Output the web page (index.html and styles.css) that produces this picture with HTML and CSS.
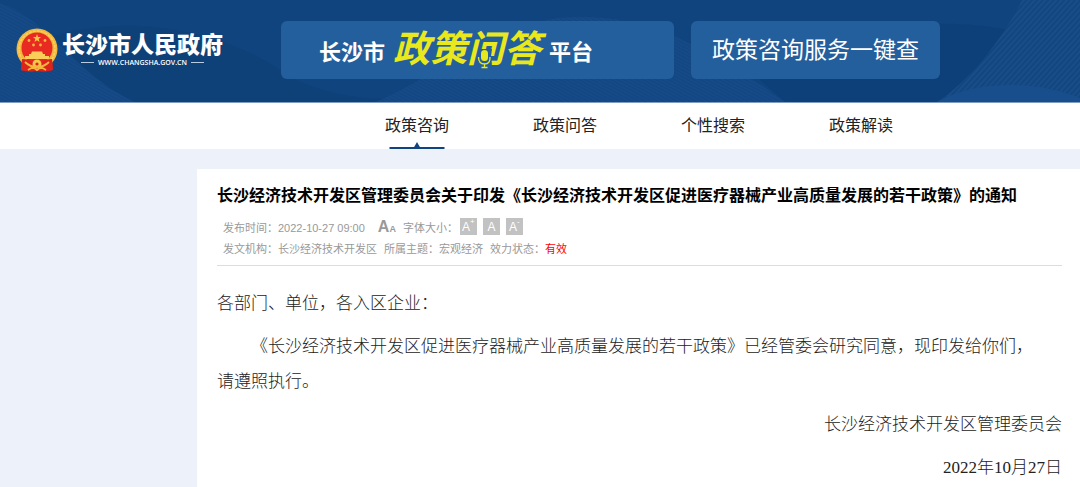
FILE: index.html
```
<!DOCTYPE html>
<html lang="zh-CN">
<head>
  <meta charset="UTF-8">
  <meta name="viewport" content="width=device-width, initial-scale=1.0">
  <title>长沙市政策问答平台</title>
  <link rel="stylesheet" href="styles.css">
</head>
<body>

  <header class="header">
    <svg class="header-bg" viewBox="0 0 1080 102" preserveAspectRatio="xMidYMid slice" aria-hidden="true">
      <defs>
        <pattern id="mesh" width="5" height="3" patternUnits="userSpaceOnUse" patternTransform="rotate(28)">
          <path d="M0 1H5" stroke="#3a78b8" stroke-width="1" opacity=".16"/>
        </pattern>
        <pattern id="rays" width="5" height="4" patternUnits="userSpaceOnUse" patternTransform="rotate(-48)">
          <path d="M0 1H5" stroke="#3a78b8" stroke-width="1" opacity=".28"/>
        </pattern>
      </defs>
      <rect width="1080" height="102" fill="#10447f"/>
      <path d="M30 45C100 12 210 22 280 70S470 100 560 60L640 102H135Z" fill="#0d3d74" opacity=".5"/>
      <path d="M0 3C50 20 75 75 135 102H0Z" fill="#124682"/>
      <path d="M0 3C50 20 75 75 135 102H0Z" fill="url(#mesh)"/>
      <path d="M375 102C430 80 500 20 570 17S700 40 785 102Z" fill="#124682"/>
      <path d="M375 102C430 80 500 20 570 17S700 40 785 102Z" fill="url(#mesh)"/>
      <path d="M760 80C850 20 960 5 1080 50V102H785Z" fill="#0d3e75" opacity=".7"/>
      <path d="M1022 0C1002 40 970 80 937 102H1080V0Z" fill="#124680"/>
      <path d="M1022 0C1002 40 970 80 937 102H1080V0Z" fill="url(#rays)"/>
      <path d="M937 102C980 78 1040 82 1080 98V102Z" fill="#184e8b"/>
    </svg>

    <a class="logo" href="#">
      <svg class="emblem" viewBox="0 0 42 44" aria-hidden="true">
        <path d="M6 31L5 42Q13 45 21 43Q29 45 37 42L36 31Z" fill="#d9201c"/>
        <circle cx="21" cy="21" r="20.5" fill="#f3b83c"/>
        <circle cx="21" cy="21" r="18" fill="none" stroke="#f9d263" stroke-width="1.5" stroke-dasharray="3 1"/>
        <circle cx="21" cy="20" r="15.5" fill="#e92a23"/>
        <path d="M21 6L22 9H25L22.700 11L23.500 14L21 12.200L18.500 14L19.300 11L17 9H20Z" fill="#f9c944"/>
        <g fill="#f5b93b">
          <circle cx="13" cy="12.500" r="1.400"/><circle cx="29" cy="12.500" r="1.400"/>
          <circle cx="17.500" cy="17" r="1.400"/><circle cx="24.500" cy="17" r="1.400"/>
        </g>
        <path d="M16 23.500H26L27 26H29V28H33V31H9V28H13V26H15Z" fill="#f9cf59"/>
        <path d="M6 31Q12 31 16 34H26Q30 31 36 31L37 42Q29 44 21 42Q13 44 5 42Z" fill="#dc241d"/>
        <circle cx="21" cy="36" r="4.500" fill="#f7c64a"/>
        <circle cx="21" cy="36" r="1.600" fill="#dc241d"/>
        <path d="M9 34Q14 39 21 39T33 34M12 42L17 39L21 42L25 39L30 42" fill="none" stroke="#f3b83c" stroke-width="1.800"/>
      </svg>
      <span class="logo-text">
        <span class="logo-name">长沙市人民政府</span>
        <span class="logo-url">WWW.CHANGSHA.GOV.CN</span>
      </span>
    </a>

    <a class="banner banner-main" href="#">
      <span>长沙市</span>
      <span class="banner-title">政策<span class="ask">问<svg class="mic" viewBox="0 0 16 22" aria-hidden="true">
        <path d="M3 0H16L13 22H0Z" fill="#245f9d"/>
        <rect x="5" y="1" width="7" height="11" rx="3.500" fill="#e8e81c"/>
        <path d="M2.500 8Q2.500 15 8.500 15T14 8M8.500 15V18M5.500 18.500H11.500" fill="none" stroke="#e8e81c" stroke-width="1.300"/>
      </svg></span>答</span>
      <span>平台</span>
    </a>

    <a class="banner banner-search" href="#">政策咨询服务一键查</a>
  </header>

  <nav class="nav">
    <a class="active" href="#">政策咨询</a>
    <a href="#">政策问答</a>
    <a href="#">个性搜索</a>
    <a href="#">政策解读</a>
  </nav>

  <main class="article">
    <h1>长沙经济技术开发区管理委员会关于印发《长沙经济技术开发区促进医疗器械产业高质量发展的若干政策》的通知</h1>

    <div class="meta">
      <div class="meta-row">
        <span class="date">发布时间：2022-10-27 09:00</span>
        <span class="size-icon" aria-hidden="true"><b>A</b><b>A</b></span>
        <span class="size-label">字体大小：</span>
        <button type="button">A<sup>+</sup></button>
        <button type="button">A</button>
        <button type="button">A<sup>-</sup></button>
      </div>
      <div class="meta-row">
        <span class="meta-item">发文机构：长沙经济技术开发区</span>
        <span class="meta-item">所属主题：宏观经济</span>
        <span class="meta-item">效力状态：<em>有效</em></span>
      </div>
    </div>

    <div class="content">
      <p>各部门、单位，各入区企业：</p>
      <p class="indent">《长沙经济技术开发区促进医疗器械产业高质量发展的若干政策》已经管委会研究同意，现印发给你们，<br>请遵照执行。</p>
      <p class="sign">长沙经济技术开发区管理委员会</p>
      <p class="sign">2022年10月27日</p>
    </div>
  </main>

</body>
</html>
```

FILE: styles.css
```
* {
  box-sizing: border-box;
}

body {
  margin: 0;
  background-color: #edf1f9;
  font-family: "Liberation Sans", "Noto Sans CJK SC", sans-serif;
  color: #222;
}

a {
  color: inherit;
  text-decoration: none;
}

/* Header */
.header {
  position: relative;
  display: flex;
  align-items: center;
  height: 103px;
  padding: 0 16px 3px;
  border-bottom: 1px solid #7f9dc0;
  background-color: #10447f;
  color: #fff;
  white-space: nowrap;
  overflow: hidden;
}

.header-bg {
  position: absolute;
  top: 0;
  left: 0;
  width: 100%;
  height: 100%;
}

.logo,
.banner {
  position: relative;
  display: flex;
  align-items: center;
  flex-shrink: 0;
}

.logo {
  gap: 4px;
  width: 265px;
}

.emblem {
  width: 42px;
  height: 44px;
}

.logo-text {
  display: flex;
  flex-direction: column;
  align-items: center;
}

.logo-name {
  font-size: 23px;
  font-weight: 900;
  line-height: 26px;
}

.logo-url {
  display: flex;
  align-items: center;
  gap: 4px;
  font-family: "Open Sans", sans-serif;
  font-size: 7px;
  font-weight: 600;
  line-height: 10px;
}

.logo-url::before,
.logo-url::after {
  content: "";
  width: 13px;
  height: 1px;
  background-color: #b9cbe0;
}

.banner {
  height: 58px;
  border-radius: 6px;
  background-color: #245f9d;
  font-size: 22px;
}

.banner-main {
  gap: 8px;
  width: 393px;
  margin-right: 17px;
  padding-left: 38px;
  font-weight: 700;
}

.banner-title {
  color: #e8e81c;
  font-size: 37px;
  font-style: italic;
  line-height: 52px;
}

.ask {
  position: relative;
}

/* microphone sits inside the character's frame */
.mic {
  position: absolute;
  top: 20px;
  left: 9px;
  width: 16px;
  height: 22px;
}

.banner-search {
  justify-content: center;
  width: 249px;
  padding-bottom: 4px;
  font-size: 23px;
}

/* Navigation */
.nav {
  display: flex;
  height: 46px;
  padding-left: 343px;
  background-color: #fff;
}

.nav a {
  position: relative;
  width: 148px;
  font-size: 16px;
  line-height: 46px;
  text-align: center;
}

.nav .active::before,
.nav .active::after {
  content: "";
  position: absolute;
  left: 50%;
  bottom: 0;
  transform: translateX(-50%);
}

.nav .active::before {
  width: 55px;
  height: 2px;
  background-color: #10447f;
}

.nav .active::after {
  border: 4px solid transparent;
  border-top: 0;
  border-bottom: 7px solid #10447f;
}

/* Article */
.article {
  margin: 20px 0 0 197px;
  padding: 14px 18px 1px 20px;
  background-color: #fff;
}

h1 {
  margin: 0;
  color: #000;
  font-size: 16px;
  line-height: 26px;
}

.meta {
  padding: 7px 6px;
  border-bottom: 1px solid #ddd;
  color: #999;
  font-size: 11px;
}

.meta-row {
  display: flex;
  align-items: center;
  height: 21px;
}

.meta-item {
  margin-right: 7px;
}

.meta em {
  color: #f00;
  font-style: normal;
}

.date {
  margin-right: 13px;
}

.size-icon {
  display: flex;
  align-items: baseline;
  margin-right: 7px;
  font-size: 16px;
}

.size-icon b + b {
  font-size: 9px;
}

.size-label {
  margin-right: 2px;
}

.meta button {
  display: flex;
  justify-content: center;
  align-items: center;
  width: 17px;
  height: 17px;
  margin-right: 6px;
  padding: 0;
  border: 0;
  background-color: #c2c2c2;
  color: #fff;
  font-family: inherit;
  font-size: 12px;
}

.meta sup {
  align-self: flex-start;
  font-size: 8px;
  line-height: 8px;
}

.content {
  padding-top: 20px;
  font-family: "Liberation Serif", "Noto Sans CJK SC", serif;
  font-size: 17px;
  font-weight: 300;
  line-height: 35px;
}

.content p {
  margin: 0 0 8px;
}

.content .indent {
  text-indent: 2em;
}

.content .sign {
  text-align: right;
}
```
